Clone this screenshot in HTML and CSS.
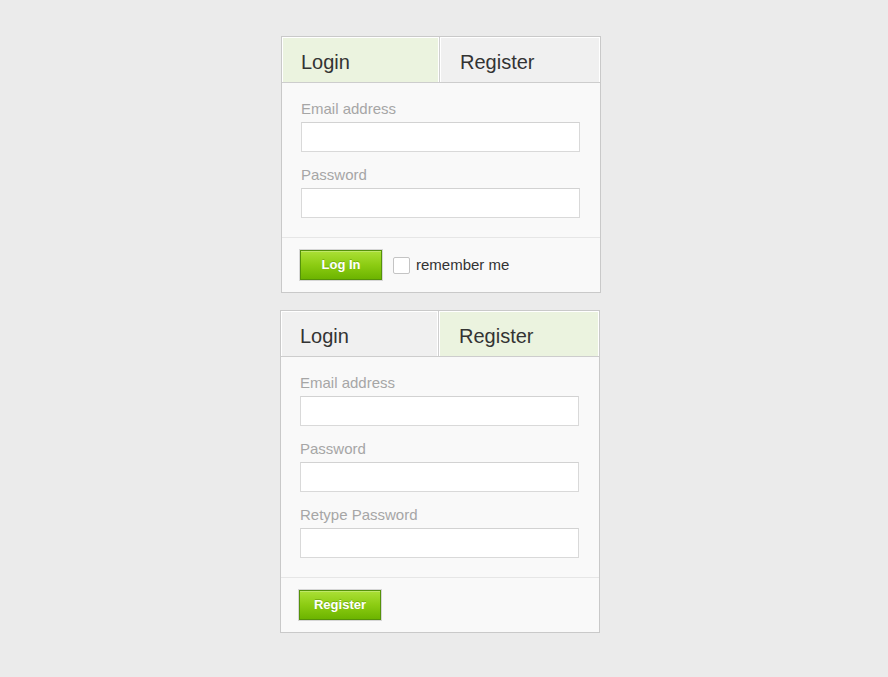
FILE: index.html
```html
<!DOCTYPE html>
<html lang="en">
<head>
<meta charset="utf-8">
<title>Login / Register</title>
<link rel="stylesheet" href="styles.css">
</head>
<body>
<div class="page">
  <section class="panel panel-first">
    <div class="tabs">
      <div class="tab tab-active">Login</div>
      <div class="tab">Register</div>
    </div>
    <form class="form">
      <div class="field">
        <label class="label">Email address</label>
        <input class="input" type="text">
      </div>
      <div class="field">
        <label class="label">Password</label>
        <input class="input" type="password">
      </div>
    </form>
    <div class="footer">
      <button class="btn" type="button">Log In</button>
      <input class="check" type="checkbox">
      <span class="check-label">remember me</span>
    </div>
  </section>

  <section class="panel">
    <div class="tabs">
      <div class="tab">Login</div>
      <div class="tab tab-active">Register</div>
    </div>
    <form class="form">
      <div class="field">
        <label class="label">Email address</label>
        <input class="input" type="text">
      </div>
      <div class="field">
        <label class="label">Password</label>
        <input class="input" type="password">
      </div>
      <div class="field">
        <label class="label">Retype Password</label>
        <input class="input" type="password">
      </div>
    </form>
    <div class="footer">
      <button class="btn" type="button">Register</button>
    </div>
  </section>
</div>
</body>
</html>
```

FILE: styles.css
```css
* { box-sizing: border-box; }

html, body {
  margin: 0;
  padding: 0;
}

body {
  background: #ebebeb;
  font-family: "Liberation Sans", Arial, sans-serif;
  color: #333;
  min-height: 677px;
}

.page {
  display: flex;
  flex-direction: column;
  align-items: flex-start;
  gap: 17px;
  padding: 36px 0 0 280px;
}

.panel {
  width: 320px;
  border: 1px solid #c9c9c9;
  background: #f9f9f9;
}

.panel-first {
  margin-left: 1px;
}

.tabs {
  display: flex;
  border-bottom: 1px solid #cdcdcd;
}

.tab {
  height: 45px;
  padding: 13px 0 8px 19px;
  font-size: 20px;
  line-height: 24px;
  color: #333;
  background: #f0f0f0;
  box-shadow: inset 1px 1px 0 #fff, inset -1px 0 0 #fff;
}

.tab:first-child {
  width: 158px;
  border-right: 1px solid #cfcfcf;
}

.tab + .tab {
  flex: 1;
  padding-left: 20px;
}

.tab-active {
  background: #ebf3df;
}

.form {
  margin: 0;
  padding: 17px 20px 19px 19px;
}

.field {
  display: flex;
  flex-direction: column;
  margin-bottom: 14px;
}

.field:last-child {
  margin-bottom: 0;
}

.label {
  font-size: 15px;
  line-height: 18px;
  color: #a6a6a6;
  margin-bottom: 4px;
}

.input {
  -webkit-appearance: none;
  appearance: none;
  display: block;
  width: 279px;
  height: 30px;
  margin: 0;
  padding: 0 6px;
  border: 1px solid #d9d9d9;
  border-top-color: #d2d2d2;
  background: #fff;
  font-family: inherit;
  font-size: 14px;
  outline: none;
}

.footer {
  display: flex;
  align-items: center;
  border-top: 1px solid #e6e6e6;
  padding: 11px 17px;
}

.btn {
  width: 82px;
  height: 30px;
  margin: 1px;
  padding: 0;
  border: 1px solid #55920a;
  box-shadow: 0 0 0 1px #d6d6d6, inset 0 1px 0 rgba(255,255,255,0.25);
  background: linear-gradient(to bottom, #abe036 0%, #8ccc12 50%, #6cb400 100%);
  color: #fff;
  font-family: inherit;
  font-size: 13px;
  font-weight: bold;
  line-height: 28px;
  text-align: center;
  text-shadow: 0 -1px 0 rgba(60,110,0,0.35);
  cursor: pointer;
}

.check {
  -webkit-appearance: none;
  appearance: none;
  width: 17px;
  height: 17px;
  margin: 0 0 0 10px;
  border: 1px solid #c4c4c4;
  border-radius: 2px;
  background: #fff;
  position: relative;
  top: 0.5px;
}

.check-label {
  margin-left: 6px;
  font-size: 15px;
  line-height: 18px;
  color: #333;
}
```
